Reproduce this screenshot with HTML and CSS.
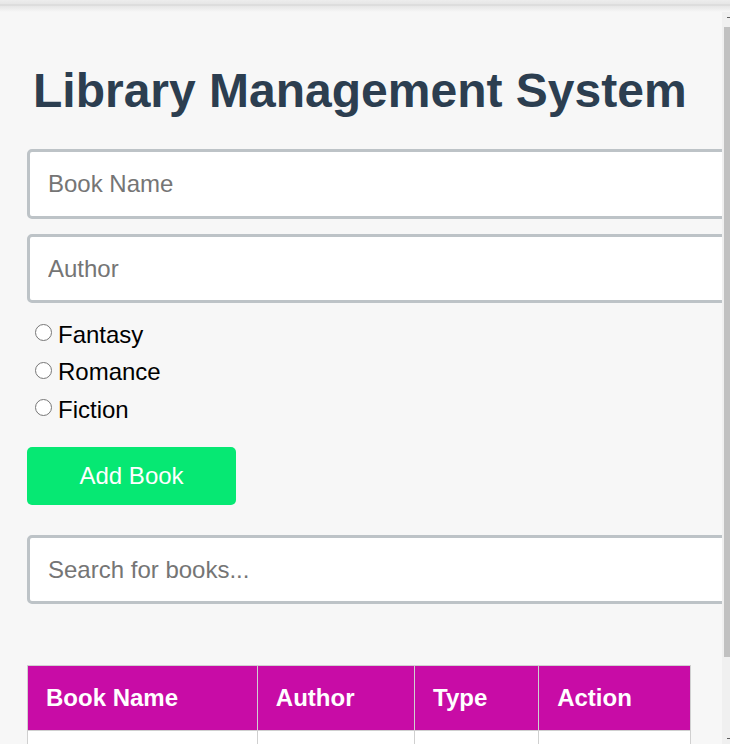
FILE: index.html
```html
<!DOCTYPE html>
<html>
<head>
<meta charset="utf-8">
<title>Library Management System</title>
<link rel="stylesheet" href="styles.css">
</head>
<body>
<div class="topbar"></div>
<div class="frame">
  <main class="main">
    <h1 class="title">Library Management System</h1>
    <input class="field" type="text" placeholder="Book Name">
    <input class="field" type="text" placeholder="Author">
    <div class="options">
      <label class="opt"><input class="radio" type="radio" name="type" value="Fantasy"><span>Fantasy</span></label>
      <label class="opt"><input class="radio" type="radio" name="type" value="Romance"><span>Romance</span></label>
      <label class="opt"><input class="radio" type="radio" name="type" value="Fiction"><span>Fiction</span></label>
    </div>
    <button class="add-btn" type="button">Add Book</button>
    <input class="field search" type="text" placeholder="Search for books...">
    <table class="books">
      <thead>
        <tr><th>Book Name</th><th>Author</th><th>Type</th><th>Action</th></tr>
      </thead>
      <tbody>
        <tr><td>&nbsp;</td><td>&nbsp;</td><td>&nbsp;</td><td>&nbsp;</td></tr>
      </tbody>
    </table>
  </main>
  <div class="scrollbar">
    <div class="sb-arrow"></div>
    <div class="sb-thumb"></div>
    <div class="sb-rest"></div>
    <div class="sb-arrow bottom"></div>
  </div>
</div>
</body>
</html>
```

FILE: styles.css
```css
html, body {
  margin: 0;
  padding: 0;
  height: 744px;
  overflow: hidden;
  background: #f7f7f7;
  font-family: "Liberation Sans", Arial, sans-serif;
}

.topbar {
  height: 12px;
  background: linear-gradient(#ededed 0, #e6e6e6 4px, #d4d4d4 5px, #e6e6e6 6px, #eeeeee 9px, #f7f7f7 12px);
}

.frame {
  display: flex;
  height: 732px;
}

.main {
  flex: 0 0 722px;
  width: 722px;
  box-sizing: border-box;
  padding: 19px 31px 0 27px;
  overflow: hidden;
}

.title {
  margin: 32px 0 31px 6px;
  font-size: 48px;
  font-weight: bold;
  color: #2c3e50;
  line-height: 55px;
  white-space: nowrap;
}

.field {
  display: block;
  width: 100%;
  margin: 0 0 15px 0;
  padding: 18px 18px;
  border: 3px solid #bdc3c7;
  border-radius: 5px;
  background: #ffffff;
  font-family: "Liberation Sans", Arial, sans-serif;
  font-size: 24px;
  line-height: 27.6px;
  color: #333;
  outline: none;
}

.field::placeholder {
  color: #757575;
}

.options {
  display: flex;
  flex-direction: column;
  gap: 9.6px;
  padding-top: 3px;
  margin: 0 0 24px 0;
}

.opt {
  display: flex;
  align-items: center;
  font-size: 24px;
  line-height: 27.6px;
  color: #000;
}

.radio {
  width: 17px;
  height: 17px;
  margin: 0 6px 0 8px;
  position: relative;
  top: -2px;
}

.add-btn {
  display: block;
  margin: 0 0 30px 0;
  padding: 15px 52.5px;
  border: none;
  border-radius: 5px;
  background: #06e873;
  color: #ffffff;
  font-family: "Liberation Sans", Arial, sans-serif;
  font-size: 24px;
  line-height: 27.6px;
}

.search {
  margin-bottom: 61px;
}

.books {
  width: 664px;
  border-collapse: collapse;
  border: 1px solid #c8c8c8;
}

.books th {
  background: #c80ca6;
  color: #ffffff;
  font-size: 24px;
  font-weight: bold;
  text-align: left;
  padding: 18px;
  line-height: 27.6px;
  border: 1px solid #d0d0d0;
}

.books td {
  background: #ffffff;
  padding: 18px;
  font-size: 24px;
  line-height: 27.6px;
  border: 1px solid #d0d0d0;
}

.scrollbar {
  flex: 0 0 8px;
  display: flex;
  flex-direction: column;
  background: #f0f0f0;
}

.sb-arrow {
  height: 15px;
  position: relative;
}

.sb-arrow::after {
  content: "";
  position: absolute;
  left: 5px;
  top: 5px;
  width: 3px;
  height: 1px;
  background: #606060;
}

.sb-thumb {
  height: 630px;
  margin-left: 2px;
  background: #c1c1c1;
}

.sb-rest {
  flex: 1;
}

.sb-arrow.bottom::after {
  top: 9px;
}
```
